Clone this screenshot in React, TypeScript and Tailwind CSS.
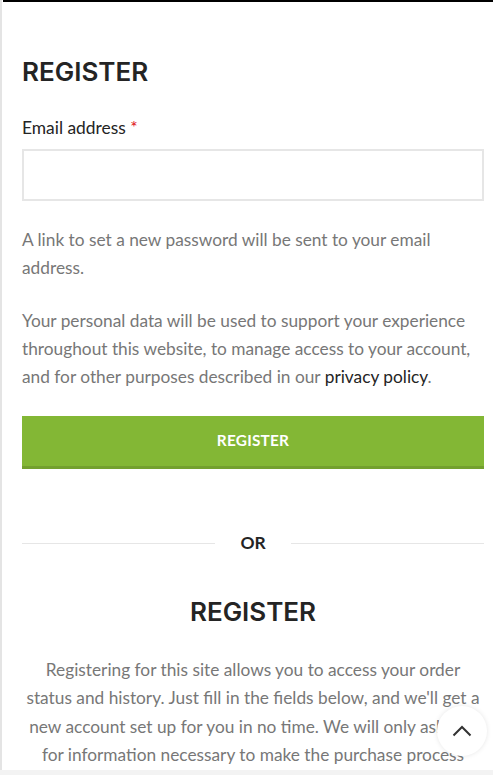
import React from 'react';

const body = { fontFamily: 'Lato, "Open Sans", sans-serif' };
const head = { fontFamily: 'Inter, "Open Sans", sans-serif' };

const App: React.FC = () => {
  return (
    <div className="relative h-[775px] w-[493px] overflow-hidden bg-[#f3f3f3]" style={body}>
      <div className="h-[770px] overflow-hidden border-l-2 border-[#e4e4e4] bg-white">
        <div className="ml-px h-[2px] bg-black" />
        <div className="pl-[20px] pr-[9px]">
          <h2 className="mt-[53px] text-[26px] font-semibold leading-[34px] text-[#242424]" style={head}>
            REGISTER
          </h2>

          <form className="mt-[27px]">
            <label className="block text-[17.4px] leading-[24px] text-[#242424]">
              Email address <span className="text-[#e01020]">*</span>
            </label>
            <input
              type="email"
              className="mt-[9px] block h-[52px] w-full border-2 border-[#e6e6e6] bg-white px-3 outline-none"
            />

            <p className="mt-[25px] text-[17.3px] leading-[28px] text-[#777777]">
              A link to set a new password will be sent to your email address.
            </p>
            <p className="mt-[25px] text-[17.3px] leading-[28px] text-[#777777]">
              Your personal data will be used to support your experience throughout this website, to manage access to
              your account, and for other purposes described in our{' '}
              <a className="text-[#242424]">privacy policy</a>.
            </p>

            <button
              type="button"
              className="mt-[25px] flex h-[53px] w-full items-center justify-center bg-[#83b735] pb-[3px] text-[15.4px] font-bold tracking-[0.2px] text-white shadow-[inset_0_-3px_0_rgba(0,0,0,0.12)]"
            >
              REGISTER
            </button>
          </form>

          <div className="mt-[64px] flex items-center gap-[25px]">
            <div className="h-px flex-1 bg-[#e6e6e6]" />
            <span className="text-[17.4px] font-bold leading-[20px] text-[#242424]">OR</span>
            <div className="h-px flex-1 bg-[#e6e6e6]" />
          </div>

          <h2 className="mt-[42px] text-center text-[26px] font-semibold leading-[34px] text-[#242424]" style={head}>
            REGISTER
          </h2>
          <p className="mt-[27px] text-center text-[17.3px] leading-[28.4px] text-[#777777]">
            Registering for this site allows you to access your order status and history. Just fill in the fields
            below, and we'll get a new account set up for you in no time. We will only ask you for information
            necessary to make the purchase process faster and easier.
          </p>
        </div>
      </div>

      <button
        type="button"
        className="absolute left-[437px] top-[706px] flex h-[50px] w-[50px] items-center justify-center rounded-full bg-white shadow-[0_0_5px_rgba(0,0,0,0.1)]"
      >
        <svg width="20" height="12" viewBox="0 0 20 12" fill="none">
          <path d="M1.5 10.5L10 2L18.5 10.5" stroke="#333333" strokeWidth="2" />
        </svg>
      </button>
    </div>
  );
};

export default App;
